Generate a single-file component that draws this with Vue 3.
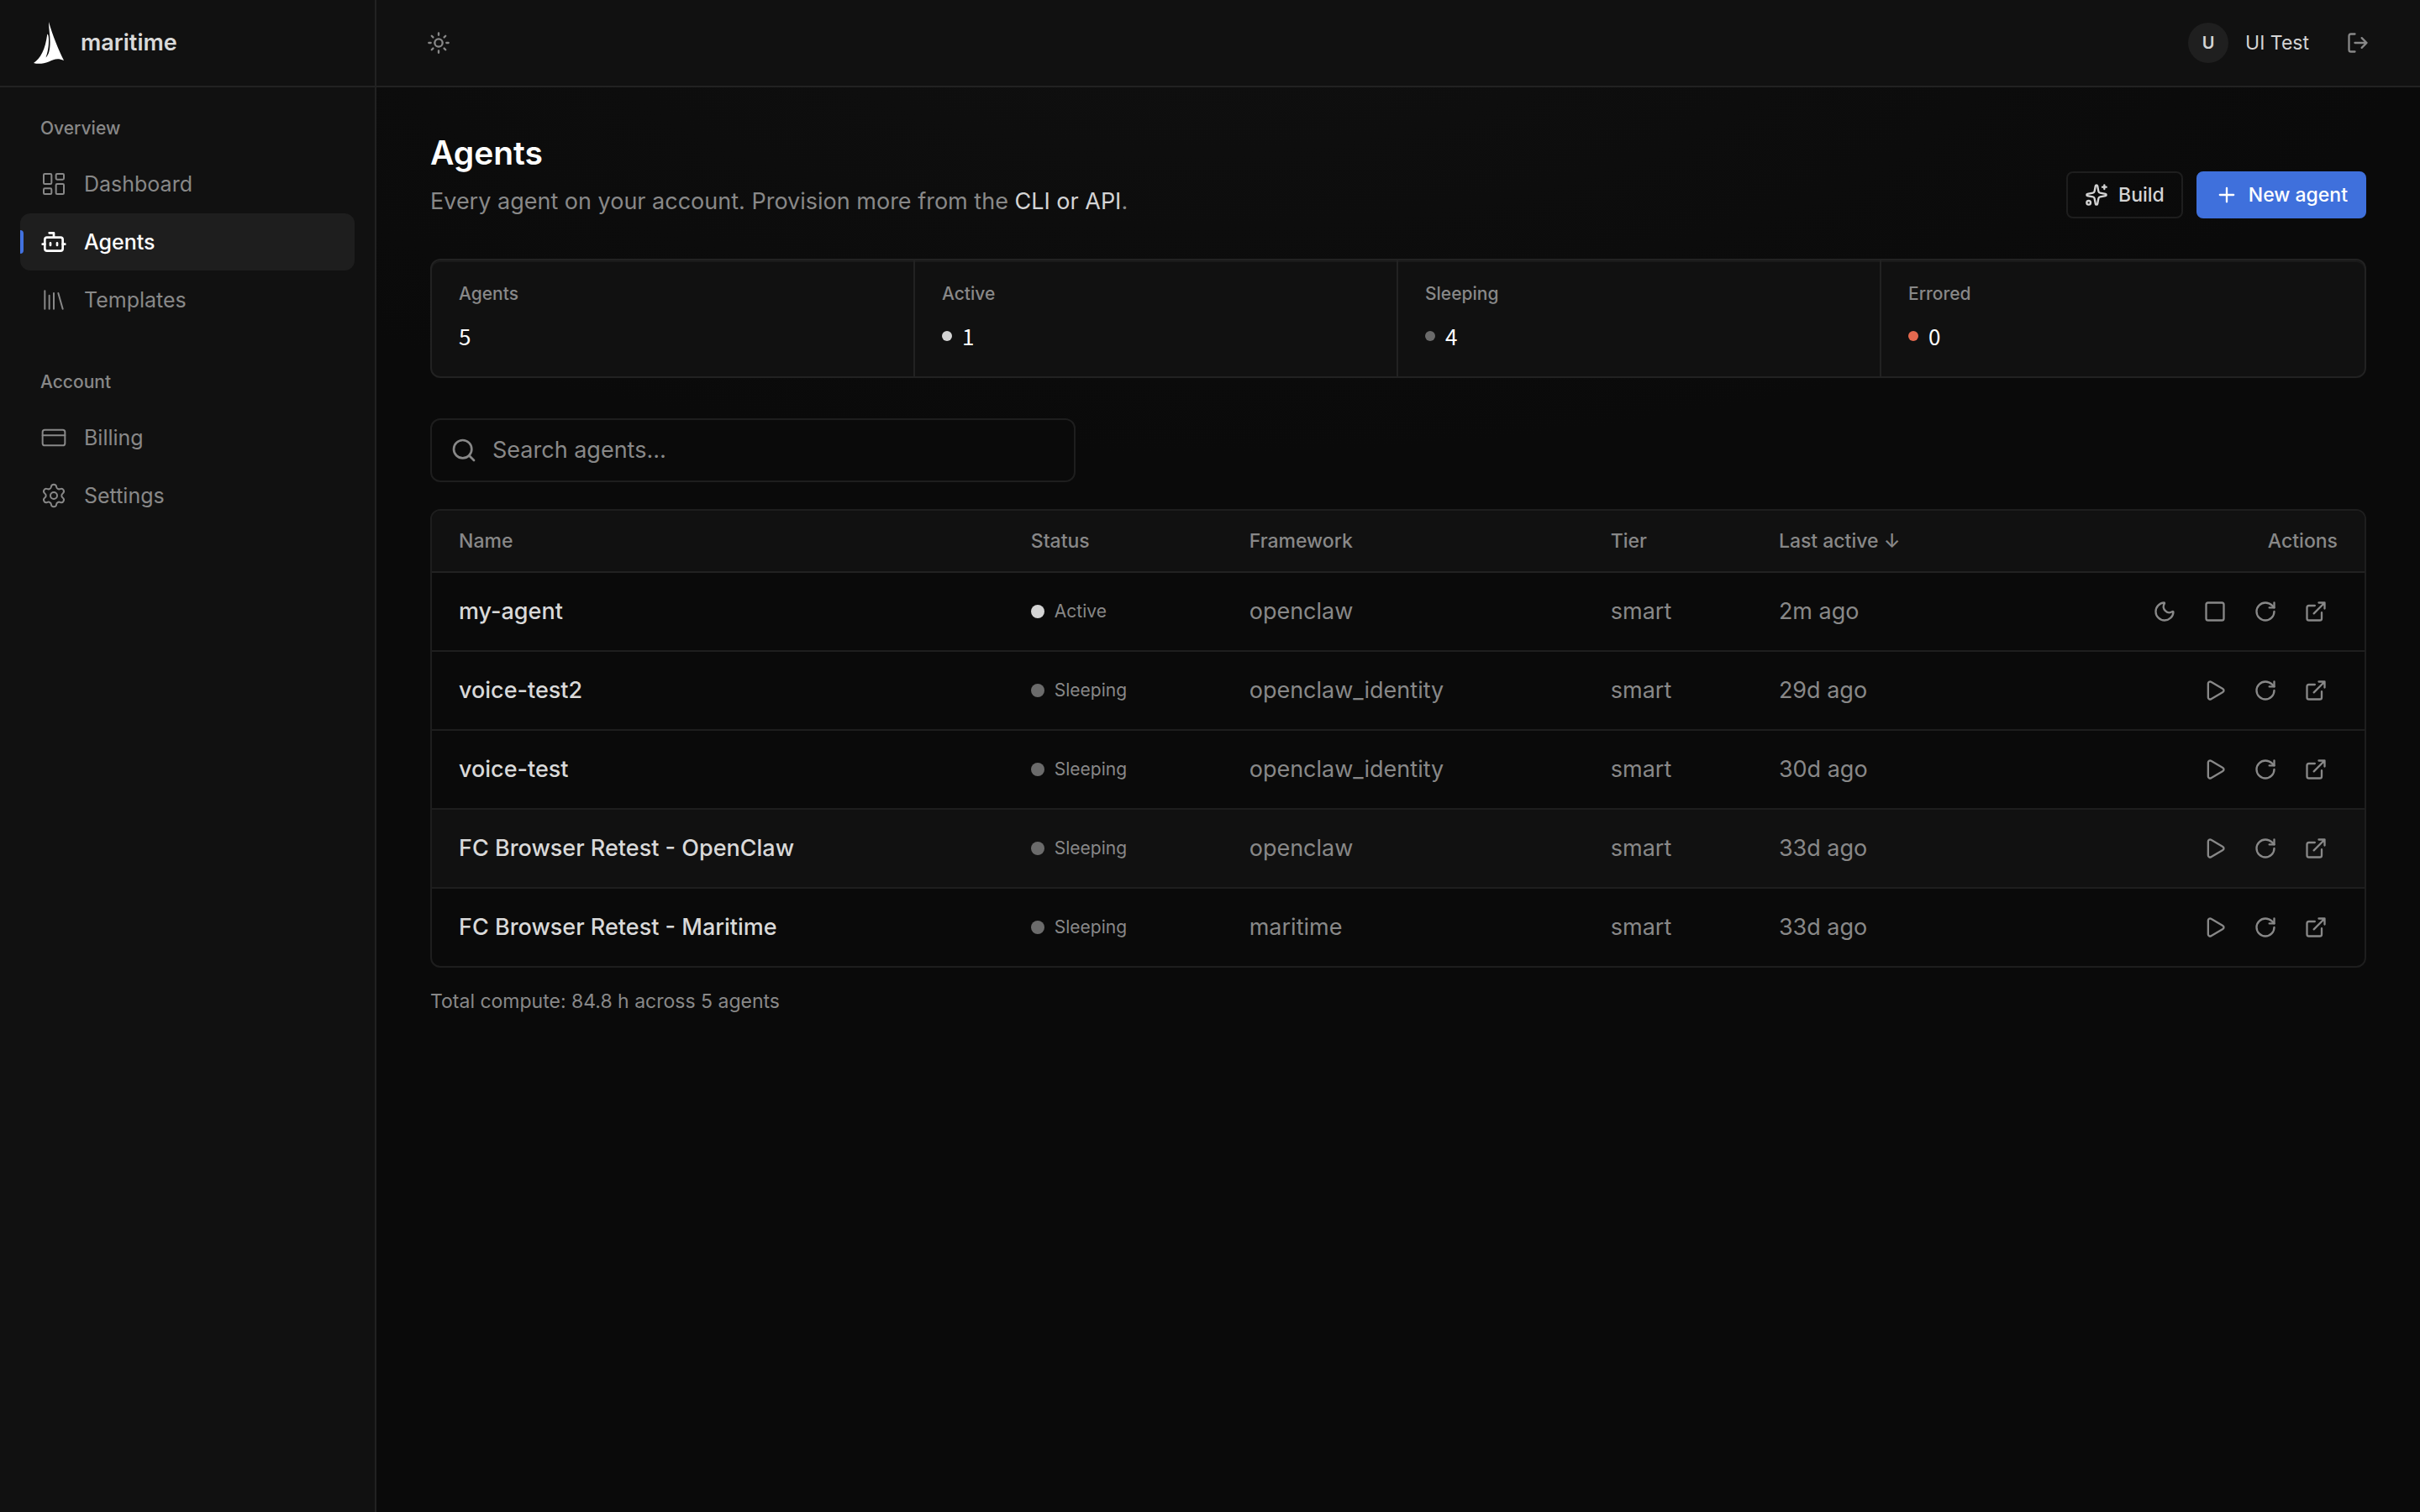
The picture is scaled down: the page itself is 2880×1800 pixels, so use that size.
<template>
  <div class="app-shell">
    <aside class="sidebar">
      <div class="brand">
        <svg class="brand-mark" viewBox="0 0 36 50" aria-hidden="true">
          <path
            d="M18 0C22.5 16 30 34 36 46C28 42.5 24 45 18 47.5C12 50 5 50.5 0 49C8 44 14 33 16.3 14.5C17.6 15 18 18 18 22C18 31 16.5 37 14.5 42.5C18 39.5 19.6 33 19.6 24C19.6 15 18 8 18 0Z"
          />
        </svg>
        <span class="brand-name">maritime</span>
      </div>

      <nav class="nav">
        <section v-for="group in navGroups" :key="group.title" class="nav-group">
          <h2 class="nav-title">{{ group.title }}</h2>
          <a
            v-for="item in group.items"
            :key="item.label"
            href="#"
            class="nav-item"
            :class="{ current: item.label === currentPage }"
          >
            <svg class="icon icon-lg" viewBox="0 0 24 24" v-html="icons[item.icon]"></svg>
            {{ item.label }}
          </a>
        </section>
      </nav>
    </aside>

    <div class="content">
      <header class="topbar">
        <button type="button" class="icon-button" aria-label="Toggle theme">
          <svg class="icon" viewBox="0 0 24 24" v-html="icons.sun"></svg>
        </button>
        <div class="user">
          <span class="avatar">U</span>
          <span class="user-name">UI Test</span>
          <button type="button" class="icon-button" aria-label="Log out">
            <svg class="icon" viewBox="0 0 24 24" v-html="icons.logout"></svg>
          </button>
        </div>
      </header>

      <main class="page">
        <div class="page-head">
          <div>
            <h1>Agents</h1>
            <p class="subtitle">
              Every agent on your account. Provision more from the
              <a href="#">CLI or API</a>.
            </p>
          </div>
          <div class="page-actions">
            <button type="button" class="btn">
              <svg class="icon" viewBox="0 0 24 24" v-html="icons.sparkles"></svg>
              Build
            </button>
            <button type="button" class="btn btn-primary">
              <svg class="icon" viewBox="0 0 24 24" v-html="icons.plus"></svg>
              New agent
            </button>
          </div>
        </div>

        <div class="stats">
          <div v-for="stat in stats" :key="stat.label" class="stat">
            <span class="stat-label">{{ stat.label }}</span>
            <span class="stat-value">
              <i v-if="stat.tone" class="stat-dot" :class="stat.tone"></i>
              {{ stat.value }}
            </span>
          </div>
        </div>

        <div class="search">
          <svg class="icon icon-lg" viewBox="0 0 24 24" v-html="icons.search"></svg>
          <input v-model="query" type="text" placeholder="Search agents…" aria-label="Search agents" />
        </div>

        <div class="table-card">
          <table>
            <colgroup>
              <col class="col-name" />
              <col class="col-status" />
              <col class="col-framework" />
              <col class="col-tier" />
              <col class="col-last" />
              <col />
            </colgroup>
            <thead>
              <tr>
                <th>Name</th>
                <th>Status</th>
                <th>Framework</th>
                <th>Tier</th>
                <th>Last active ↓</th>
                <th class="align-right">Actions</th>
              </tr>
            </thead>
            <tbody>
              <tr
                v-for="agent in filteredAgents"
                :key="agent.name"
                :class="{ highlighted: agent.name === highlighted }"
              >
                <td class="agent-name">{{ agent.name }}</td>
                <td>
                  <span class="status">
                    <i class="status-dot" :class="agent.status.toLowerCase()"></i>
                    {{ agent.status }}
                  </span>
                </td>
                <td>{{ agent.framework }}</td>
                <td>smart</td>
                <td>{{ agent.lastActive }}</td>
                <td>
                  <div class="row-actions">
                    <button
                      v-for="action in actionsFor(agent)"
                      :key="action"
                      type="button"
                      class="icon-button"
                      :aria-label="action"
                    >
                      <svg class="icon" viewBox="0 0 24 24" v-html="icons[action]"></svg>
                    </button>
                  </div>
                </td>
              </tr>
            </tbody>
          </table>
        </div>

        <p class="total">Total compute: 84.8 h across 5 agents</p>
      </main>
    </div>
  </div>
</template>

<script setup>
import { computed, ref } from "vue";

const currentPage = "Agents";
const highlighted = "FC Browser Retest - OpenClaw";
const query = ref("");

const navGroups = [
  {
    title: "Overview",
    items: [
      { label: "Dashboard", icon: "dashboard" },
      { label: "Agents", icon: "bot" },
      { label: "Templates", icon: "library" },
    ],
  },
  {
    title: "Account",
    items: [
      { label: "Billing", icon: "card" },
      { label: "Settings", icon: "settings" },
    ],
  },
];

const agents = [
  { name: "my-agent", status: "Active", framework: "openclaw", lastActive: "2m ago" },
  { name: "voice-test2", status: "Sleeping", framework: "openclaw_identity", lastActive: "29d ago" },
  { name: "voice-test", status: "Sleeping", framework: "openclaw_identity", lastActive: "30d ago" },
  { name: "FC Browser Retest - OpenClaw", status: "Sleeping", framework: "openclaw", lastActive: "33d ago" },
  { name: "FC Browser Retest - Maritime", status: "Sleeping", framework: "maritime", lastActive: "33d ago" },
];

const countByStatus = (status) => agents.filter((agent) => agent.status === status).length;

const stats = [
  { label: "Agents", value: agents.length },
  { label: "Active", value: countByStatus("Active"), tone: "active" },
  { label: "Sleeping", value: countByStatus("Sleeping"), tone: "sleeping" },
  { label: "Errored", value: countByStatus("Errored"), tone: "errored" },
];

const filteredAgents = computed(() =>
  agents.filter((agent) => agent.name.toLowerCase().includes(query.value.toLowerCase()))
);

const actionsFor = (agent) =>
  agent.status === "Active" ? ["sleep", "stop", "restart", "open"] : ["start", "restart", "open"];

const icons = {
  dashboard:
    '<rect width="7" height="9" x="3" y="3" rx="1"/><rect width="7" height="5" x="14" y="3" rx="1"/><rect width="7" height="9" x="14" y="12" rx="1"/><rect width="7" height="5" x="3" y="16" rx="1"/>',
  bot: '<path d="M12 8V4H8"/><rect width="16" height="12" x="4" y="8" rx="2"/><path d="M2 14h2M20 14h2M15 13v2M9 13v2"/>',
  library: '<path d="m16 6 4 14M12 6v14M8 8v12M4 4v16"/>',
  card: '<rect width="20" height="14" x="2" y="5" rx="2"/><path d="M2 10h20"/>',
  settings:
    '<path d="M9.671 4.136a2.34 2.34 0 0 1 4.659 0 2.34 2.34 0 0 0 3.319 1.915 2.34 2.34 0 0 1 2.33 4.033 2.34 2.34 0 0 0 0 3.831 2.34 2.34 0 0 1-2.33 4.033 2.34 2.34 0 0 0-3.319 1.915 2.34 2.34 0 0 1-4.659 0 2.34 2.34 0 0 0-3.32-1.915 2.34 2.34 0 0 1-2.33-4.033 2.34 2.34 0 0 0 0-3.831A2.34 2.34 0 0 1 6.35 6.051a2.34 2.34 0 0 0 3.319-1.915"/><circle cx="12" cy="12" r="3"/>',
  sun: '<circle cx="12" cy="12" r="4"/><path d="M12 2v2M12 20v2M4.93 4.93l1.41 1.41M17.66 17.66l1.41 1.41M2 12h2M20 12h2M6.34 17.66l-1.41 1.41M19.07 4.93l-1.41 1.41"/>',
  logout: '<path d="m16 17 5-5-5-5M21 12H9M9 21H5a2 2 0 0 1-2-2V5a2 2 0 0 1 2-2h4"/>',
  sparkles:
    '<path d="M11.017 2.814a1 1 0 0 1 1.966 0l1.051 5.558a2 2 0 0 0 1.594 1.594l5.558 1.051a1 1 0 0 1 0 1.966l-5.558 1.051a2 2 0 0 0-1.594 1.594l-1.051 5.558a1 1 0 0 1-1.966 0l-1.051-5.558a2 2 0 0 0-1.594-1.594l-5.558-1.051a1 1 0 0 1 0-1.966l5.558-1.051a2 2 0 0 0 1.594-1.594z"/><path d="M20 2v4M22 4h-4"/><circle cx="4" cy="20" r="2"/>',
  plus: '<path d="M5 12h14M12 5v14"/>',
  search: '<path d="m21 21-4.34-4.34"/><circle cx="11" cy="11" r="8"/>',
  sleep:
    '<path d="M20.985 12.486a9 9 0 1 1-9.473-9.472c.405-.022.617.46.402.803a6 6 0 0 0 8.268 8.268c.344-.215.825-.004.803.401"/>',
  stop: '<rect width="18" height="18" x="3" y="3" rx="2"/>',
  start:
    '<path d="M5 5a2 2 0 0 1 3.008-1.728l11.997 6.998a2 2 0 0 1 .003 3.458l-12 7A2 2 0 0 1 5 19z"/>',
  restart: '<path d="M21 12a9 9 0 1 1-9-9c2.52 0 4.93 1 6.74 2.74L21 8"/><path d="M21 3v5h-5"/>',
  open: '<path d="M15 3h6v6M10 14 21 3M18 13v6a2 2 0 0 1-2 2H5a2 2 0 0 1-2-2V8a2 2 0 0 1 2-2h6"/>',
};
</script>

<style>
body {
  background: #0a0a0a;
}
</style>

<style scoped>
.app-shell {
  display: flex;
  min-height: 100vh;
  background: #0a0a0a;
  color: #888;
  font-family: Inter, "Liberation Sans", sans-serif;
  font-size: 27px;
  line-height: 40px;
}

h1,
h2,
p {
  margin: 0;
}

a {
  text-decoration: none;
}

button,
input {
  font: inherit;
  color: inherit;
}

.icon {
  width: 28px;
  height: 28px;
  flex: none;
  fill: none;
  stroke: currentColor;
  stroke-width: 2;
  stroke-linecap: round;
  stroke-linejoin: round;
}

.icon-lg {
  width: 32px;
  height: 32px;
}

.icon-button {
  display: flex;
  padding: 12px;
  border: 0;
  background: none;
  cursor: pointer;
}

/* Sidebar */
.sidebar {
  width: 448px;
  flex: none;
  box-sizing: border-box;
  border-right: 2px solid #222;
  background: #111;
}

.brand {
  display: flex;
  align-items: center;
  gap: 20px;
  height: 104px;
  box-sizing: border-box;
  padding-left: 40px;
  border-bottom: 2px solid #222;
}

.brand-mark {
  width: 36px;
  height: 50px;
  fill: #fff;
}

.brand-name {
  color: #d9d9d9;
  font-size: 27px;
  font-weight: 600;
}

.nav {
  display: flex;
  flex-direction: column;
  gap: 48px;
  padding: 33px 24px;
}

.nav-group {
  display: flex;
  flex-direction: column;
  gap: 1px;
}

.nav-title {
  margin-bottom: 15px;
  padding-left: 24px;
  font-size: 21px;
  font-weight: 500;
  line-height: 32px;
}

.nav-item {
  position: relative;
  display: flex;
  align-items: center;
  gap: 20px;
  height: 68px;
  padding-left: 24px;
  border-radius: 12px;
  color: #888;
  font-size: 25px;
}

.nav-item .icon {
  stroke-width: 1.5;
}

.nav-item.current {
  background: #1e1e1e;
  color: #fff;
  font-weight: 500;
}

.nav-item.current .icon {
  stroke-width: 2;
}

.nav-item.current::before {
  content: "";
  position: absolute;
  left: 0;
  top: 20px;
  width: 4px;
  height: 28px;
  border-radius: 0 4px 4px 0;
  background: #4272e0;
}

/* Top bar */
.content {
  flex: 1;
  min-width: 0;
  background: radial-gradient(ellipse 60% 30% at 40% 0, #101010, #0a0a0a);
}

.topbar {
  display: flex;
  align-items: center;
  justify-content: space-between;
  height: 104px;
  box-sizing: border-box;
  padding: 0 48px;
  border-bottom: 2px solid #222;
  background: #111;
}

.user {
  display: flex;
  align-items: center;
  gap: 20px;
  color: #d4d4d4;
  font-size: 23px;
}

.avatar {
  width: 48px;
  height: 48px;
  border-radius: 50%;
  background: #1f1f1f;
  font-size: 20px;
  font-weight: 600;
  line-height: 48px;
  text-align: center;
}

.user .icon-button {
  margin-left: 12px;
  color: #888;
}

/* Page */
.page {
  padding: 56px 64px;
}

.page-head {
  display: flex;
  align-items: flex-end;
  justify-content: space-between;
  margin-bottom: 48px;
}

h1 {
  color: #fff;
  font-size: 39px;
  font-weight: 600;
  line-height: 44px;
}

.subtitle {
  margin-top: 16px;
}

.subtitle a {
  color: #d4d4d4;
}

.page-actions {
  display: flex;
  gap: 16px;
}

.btn {
  display: flex;
  align-items: center;
  gap: 12px;
  height: 56px;
  padding: 0 20px;
  border: 2px solid #1e1e1e;
  border-radius: 8px;
  background: transparent;
  color: #d4d4d4;
  font-size: 23px;
  font-weight: 500;
  cursor: pointer;
}

.btn-primary {
  border-color: #3f70dc;
  background: #3f70dc;
  color: #fff;
}

.stats {
  display: grid;
  grid-template-columns: repeat(4, 1fr);
  border: 2px solid #222;
  border-radius: 12px;
  background: #111;
  box-shadow: inset 0 2px 0 #1a1a1a;
}

.stat {
  display: flex;
  flex-direction: column;
  gap: 16px;
  padding: 24px 32px 30px;
}

.stat:not(:last-child) {
  border-right: 2px solid #222;
}

.stat-label {
  font-size: 21px;
  font-weight: 500;
  line-height: 32px;
}

.stat-value {
  display: flex;
  align-items: center;
  gap: 12px;
  color: #fff;
  font-family: "Noto Sans CJK JP", sans-serif;
  font-size: 26px;
  line-height: 36px;
}

.stat-dot {
  width: 12px;
  height: 12px;
  border-radius: 50%;
}

.active {
  background: #d4d4d4;
}

.sleeping {
  background: #6b6b6b;
}

.errored {
  background: #e5694f;
}

.search {
  display: flex;
  align-items: center;
  gap: 18px;
  width: 768px;
  max-width: 100%;
  height: 76px;
  box-sizing: border-box;
  margin: 48px 0 32px;
  padding: 0 22px;
  border: 2px solid #1e1e1e;
  border-radius: 12px;
  background: #0a0a0a;
}

.search input {
  flex: 1;
  min-width: 0;
  padding: 0;
  border: 0;
  outline: 0;
  background: none;
}

.search input::placeholder {
  color: #888;
  opacity: 1;
}

/* Agents table */
.table-card {
  overflow: hidden;
  border: 2px solid #1e1e1e;
  border-radius: 12px;
  background: #0a0a0a;
}

table {
  width: 100%;
  table-layout: fixed;
  border-spacing: 0;
}

.col-name {
  width: 29.6%;
}

.col-status {
  width: 11.3%;
}

.col-framework {
  width: 18.7%;
}

.col-tier {
  width: 8.7%;
}

.col-last {
  width: 12%;
}

th {
  height: 72px;
  padding: 0 32px;
  border-bottom: 2px solid #222;
  background: #111;
  font-size: 23px;
  font-weight: 500;
  text-align: left;
}

td {
  height: 92px;
  padding: 0 32px;
  border-bottom: 2px solid #1e1e1e;
}

.align-right {
  text-align: right;
}

tbody tr:last-child td {
  border-bottom: 0;
}

.highlighted td {
  background: #111;
}

.agent-name {
  color: #d9d9d9;
  font-weight: 500;
}

.row-actions {
  display: flex;
  align-items: center;
  justify-content: flex-end;
  gap: 8px;
}

.status {
  display: flex;
  align-items: center;
  gap: 12px;
  font-size: 21px;
}

.status-dot {
  width: 16px;
  height: 16px;
  border-radius: 50%;
}

.total {
  margin-top: 20px;
  font-size: 23px;
}
</style>
